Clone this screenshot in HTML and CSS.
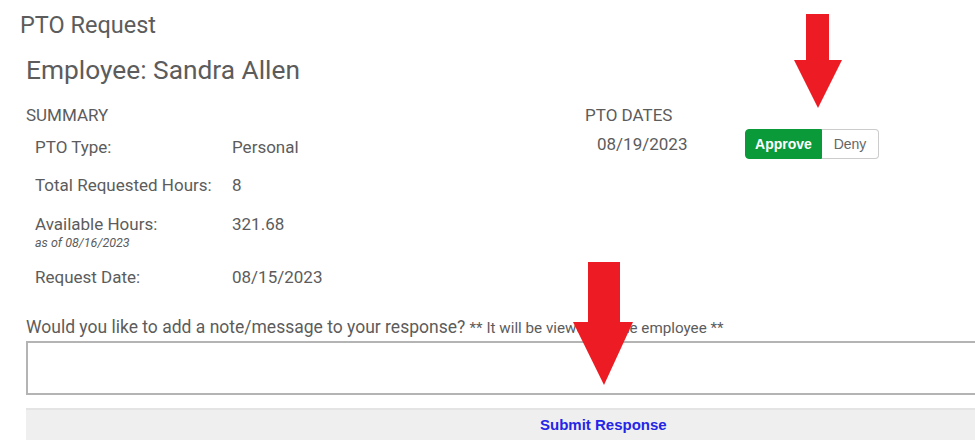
FILE: index.html
```html
<!DOCTYPE html>
<html>
<head>
    <link rel="stylesheet" href="styles.css">
</head>
<body>
    <div class="page">
        <h1 class="title">PTO Request</h1>
        <h2 class="employee">Employee: Sandra Allen</h2>
        <div class="details">
            <div class="summary">
                <div class="section-label">SUMMARY</div>
                <div class="row"><span class="label">PTO Type:</span><span class="value">Personal</span></div>
                <div class="row"><span class="label">Total Requested Hours:</span><span class="value">8</span></div>
                <div class="row"><span class="label">Available Hours:<small class="asof">as of 08/16/2023</small></span><span class="value">321.68</span></div>
                <div class="row"><span class="label">Request Date:</span><span class="value">08/15/2023</span></div>
            </div>
            <div class="dates">
                <div class="section-label">PTO DATES</div>
                <div class="date-row">
                    <span class="date">08/19/2023</span>
                    <div class="toggle">
                        <button class="btn approve">Approve</button>
                        <button class="btn deny">Deny</button>
                    </div>
                </div>
            </div>
        </div>
        <div class="note-label">Would you like to add a note/message to your response? <span class="note-hint">** It will be viewed by the employee **</span></div>
        <textarea class="note"></textarea>
        <div class="submit">Submit Response</div>
    </div>

    <svg class="arrow arrow-top" width="50" height="96" viewBox="0 0 50 96">
        <polygon points="12,0 35,0 35,46 48,46 24,94 0,46 12,46" />
    </svg>
    <svg class="arrow arrow-bottom" width="62" height="125" viewBox="0 0 62 125">
        <polygon points="15,0 47,0 47,60 60,60 31,123 0,60 15,60" />
    </svg>
</body>
</html>
```

FILE: styles.css
```css
body {
    margin: 0; background: #fff;
    font-family: Roboto, "Liberation Sans", sans-serif;
    color: #5c5c5c; overflow: hidden;
}
.page { padding-top: 11px; width: 1100px }
.title { font-size: 23.5px; font-weight: normal; margin: 0 0 0 20px; line-height: 28px }
.employee { font-size: 26.3px; font-weight: normal; margin: 15px 0 0 26px; line-height: 32px }
.details { display: flex; margin: 19px 0 0 26px }
.summary { width: 559px }
.section-label { font-size: 17px; line-height: 20px }
.row { display: flex; padding-left: 9px; font-size: 17px; line-height: 20px; margin-top: 18px }
.section-label + .row { margin-top: 12px }
.row:nth-child(4) { margin-top: 19px }
.row:last-child { margin-top: 17px }
.label { width: 197px; display: flex; flex-direction: column }
.asof { font-size: 12.5px; font-style: italic; line-height: 14px; margin-top: 2px }
.date-row { display: flex; align-items: center; padding-left: 12px; margin-top: 4px }
.date { font-size: 17px; width: 148px; line-height: 20px }
.toggle { display: flex }
.btn {
    font-family: "Liberation Sans", Arial, sans-serif; font-size: 14px;
    height: 30px; padding: 0; cursor: pointer;
    border: 1px solid #ccc; background: #fff; color: #666;
}
.approve { background: #0a9a3a; border-color: #0a9a3a; color: #fff; font-weight: bold; border-radius: 4px 0 0 4px; width: 77px }
.deny { border-left: 0; border-radius: 0 4px 4px 0; width: 57px }
.note-label { font-size: 17.5px; margin: 30px 0 0 26px; line-height: 20px }
.note-hint { font-size: 15.2px }
.note {
    display: block; margin: 3px 0 0 26px; width: 1000px; height: 54px;
    border: 2px solid #b4b4b4; box-sizing: border-box; resize: none;
}
.submit {
    margin: 13px 0 0 26px; width: 1000px; height: 40px;
    background: #efefef; border-top: 2px solid #e4e4e4;
    font-family: "Liberation Sans", Arial, sans-serif; font-weight: bold;
    font-size: 15px; line-height: 18px; color: #2525e6; padding: 6px 0 0 514px; box-sizing: border-box;
}
.arrow { position: absolute; fill: #ed1c24 }
.arrow-top { left: 794px; top: 14px }
.arrow-bottom { left: 573px; top: 262px }
```
